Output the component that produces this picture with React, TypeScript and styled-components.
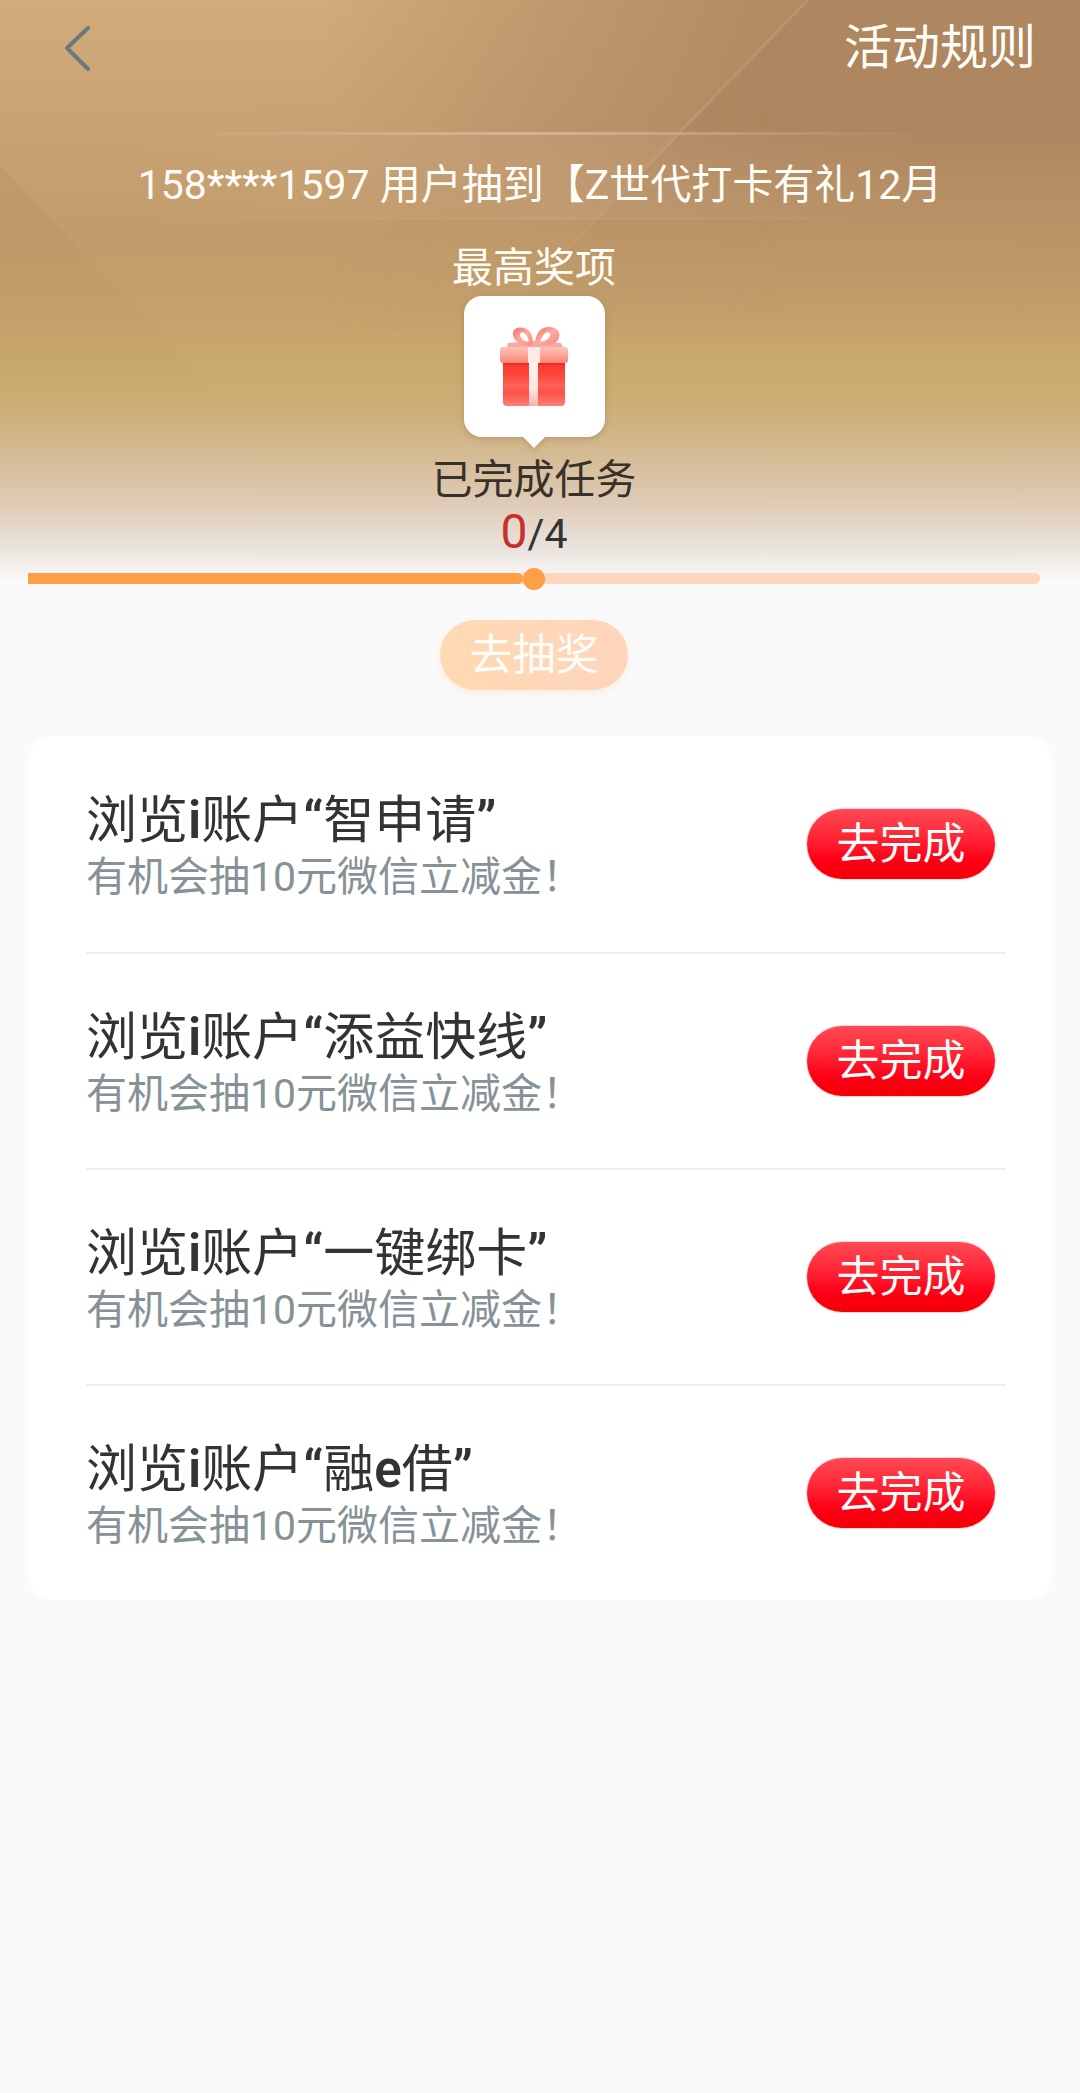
import React from "react";
import styled, { createGlobalStyle } from "styled-components";

const GlobalStyle = createGlobalStyle`
  *, *::before, *::after { box-sizing: border-box; }
  body {
    margin: 0;
    background: #fafafa;
    color: #333333;
    font-family: Roboto, "Noto Sans CJK SC", sans-serif;
    font-size: 41px;
    line-height: 56px;
  }
  button { font: inherit; border: 0; padding: 0; background: none; cursor: pointer; }
  h1, h2, p, ul { margin: 0; padding: 0; font: inherit; }
`;

const Page = styled.main`
  position: relative;
  min-height: 100vh;
`;

const Backdrop = styled.svg`
  position: absolute;
  inset: 0 0 auto 0;
  width: 100%;
  height: 580px;
  z-index: -1;
`;

const TopBar = styled.header`
  display: flex;
  align-items: center;
  justify-content: space-between;
  height: 96px;
  padding: 0 44px 0 56px;
  margin-bottom: 36px;
`;

const BackButton = styled.button`
  display: flex;
  width: 44px;
  height: 56px;
  align-items: center;
  justify-content: flex-start;
`;

const RulesButton = styled.button`
  color: #fffdf6;
  font-size: 48px;
`;

const Marquee = styled.p`
  position: relative;
  padding: 25px 0 7px;
  text-align: center;
  white-space: nowrap;
  overflow: hidden;
  color: #fffdf6;
  background: linear-gradient(90deg, rgba(210, 175, 150, 0) 12%, rgba(210, 175, 150, 0.16) 50%, rgba(210, 175, 150, 0) 86%);

  &::before,
  &::after {
    content: "";
    position: absolute;
    left: 15%;
    right: 14%;
    height: 3px;
  }
  &::before {
    top: 0;
    background: linear-gradient(90deg, rgba(222, 186, 162, 0), rgba(222, 186, 162, 0.75) 45%, rgba(222, 186, 162, 0));
  }
  &::after {
    bottom: 0;
    background: linear-gradient(90deg, rgba(210, 175, 120, 0), rgba(210, 175, 120, 0.2) 45%, rgba(210, 175, 120, 0));
  }
`;

const Draw = styled.section`
  display: flex;
  flex-direction: column;
  align-items: center;
  padding: 20px 40px 0 28px;
`;

const PrizeLabel = styled.h1`
  color: #fffdf6;
`;

const PrizeCard = styled.div`
  position: relative;
  display: flex;
  align-items: center;
  justify-content: center;
  width: 141px;
  height: 141px;
  margin-bottom: 15px;
  border-radius: 18px;
  background: #ffffff;
  filter: drop-shadow(0 2px 3px rgba(120, 85, 40, 0.3));

  &::after {
    content: "";
    position: absolute;
    top: 100%;
    left: 50%;
    transform: translateX(-50%);
    border: 11px solid transparent;
    border-top-color: #ffffff;
    border-bottom: 0;
  }
`;

const DoneLabel = styled.p`
  color: #38302a;
`;

const Counter = styled.p`
  margin-bottom: 15px;
  line-height: 48px;
`;

const CounterDone = styled.span`
  color: #c8302c;
  font-size: 48px;
`;

const Track = styled.div`
  display: flex;
  align-items: center;
  width: 100%;
  height: 11px;
  border-radius: 0 6px 6px 0;
  background: #fdd6bb;
`;

const TrackFill = styled.div`
  height: 11px;
  border-radius: 0 6px 6px 0;
  background: #fe9e46;
`;

const TrackDot = styled.div`
  flex: none;
  width: 22px;
  height: 22px;
  border-radius: 50%;
  background: #fe9e46;
`;

const Pill = styled.button<{ $tone: "muted" | "primary" }>`
  flex: none;
  width: 188px;
  height: 70px;
  border-radius: 35px;
  color: #fffdfa;
  font-size: 43px;
  background: ${({ $tone }) =>
    $tone === "muted"
      ? "linear-gradient(100deg, #fedab2, #ffd5bd)"
      : "linear-gradient(180deg, #ff4a55 0%, #fe2636 40%, #fd0018 72%, #f50004 100%)"};
  box-shadow: ${({ $tone }) =>
    $tone === "muted" ? "0 3px 8px rgba(254, 200, 160, 0.25)" : "0 0 2px rgba(253, 0, 24, 0.5)"};
`;

const DrawButton = styled(Pill)`
  margin-top: 36px;
`;

const Tasks = styled.ul`
  margin: 46px 28px 0;
  padding: 0 46px 0 58px;
  border-radius: 24px;
  background: #ffffff;
  list-style: none;
`;

const Task = styled.li`
  display: flex;
  align-items: center;
  justify-content: space-between;
  height: 216px;
  padding-right: 11px;

  & + & {
    border-top: 2px solid #eeeeee;
  }
`;

const TaskText = styled.div`
  padding-top: 10px;
`;

const TaskTitle = styled.h2`
  color: #333333;
  font-size: 51px;
  line-height: 56px;
`;

const Latin = styled.b`
  font-weight: 600;
`;

const TaskNote = styled.p`
  color: #869296;
`;

const tasks = ["浏览i账户“智申请”", "浏览i账户“添益快线”", "浏览i账户“一键绑卡”", "浏览i账户“融e借”"];

/* Latin letters and quotes are set heavier than the Chinese characters. */
function mixedWeight(text: string) {
  return text
    .split(/([a-z“”]+)/)
    .map((part, index) => (index % 2 ? <Latin key={index}>{part}</Latin> : part));
}

function HeroBackdrop() {
  return (
    <Backdrop viewBox="0 0 1080 580" preserveAspectRatio="none" aria-hidden="true">
      <defs>
        <linearGradient id="base" x1="0" y1="0" x2="0" y2="1">
          <stop offset="0" stopColor="#d2ab7b" />
          <stop offset="0.2" stopColor="#caa375" />
          <stop offset="0.4" stopColor="#c19c6b" />
          <stop offset="0.52" stopColor="#c4a06c" />
          <stop offset="0.64" stopColor="#caaa6d" />
          <stop offset="0.7" stopColor="#ccae76" />
          <stop offset="0.78" stopColor="#d4ba92" />
          <stop offset="0.86" stopColor="#decab3" />
          <stop offset="0.94" stopColor="#e9e1da" />
          <stop offset="1" stopColor="#f9f9f9" />
        </linearGradient>
        <linearGradient id="side" x1="0.3" y1="0" x2="0.72" y2="0">
          <stop offset="0" stopColor="#ab835e" stopOpacity="0" />
          <stop offset="0.5" stopColor="#ab835e" stopOpacity="0.45" />
          <stop offset="1" stopColor="#ab835e" stopOpacity="0.8" />
        </linearGradient>
        <linearGradient id="fade" x1="0" y1="0" x2="0" y2="1">
          <stop offset="0" stopColor="#fff" />
          <stop offset="0.22" stopColor="#fff" />
          <stop offset="0.42" stopColor="#fff" stopOpacity="0.3" />
          <stop offset="0.6" stopColor="#fff" stopOpacity="0" />
        </linearGradient>
        <mask id="upper">
          <rect width="1080" height="580" fill="url(#fade)" />
        </mask>
        <linearGradient id="facet" x1="0" y1="165" x2="0" y2="440" gradientUnits="userSpaceOnUse">
          <stop offset="0" stopColor="#b08a55" stopOpacity="0.22" />
          <stop offset="1" stopColor="#b08a55" stopOpacity="0" />
        </linearGradient>
      </defs>
      <rect width="1080" height="580" fill="url(#base)" />
      <g mask="url(#upper)">
        <rect width="1080" height="580" fill="url(#side)" />
        <path d="M808 0H1080V580H248Z" fill="#a87f5b" fillOpacity="0.4" />
        <path d="M808 0L460 360" stroke="#cfa680" strokeOpacity="0.35" strokeWidth="3" />
      </g>
      <path d="M0 165L260 440H0Z" fill="url(#facet)" />
    </Backdrop>
  );
}

function GiftIcon() {
  return (
    <svg width="70" height="82" viewBox="0 0 70 82" aria-hidden="true">
      <defs>
        <linearGradient id="box" x1="0" y1="0" x2="0" y2="1">
          <stop offset="0" stopColor="#fa3326" />
          <stop offset="0.35" stopColor="#fd4b3e" />
          <stop offset="0.55" stopColor="#ff6258" />
          <stop offset="0.7" stopColor="#fc5148" />
          <stop offset="1" stopColor="#fb8177" />
        </linearGradient>
        <linearGradient id="lid" x1="0" y1="0" x2="0" y2="1">
          <stop offset="0" stopColor="#ffc3b8" />
          <stop offset="1" stopColor="#fb8577" />
        </linearGradient>
        <linearGradient id="ribbon" x1="0" y1="0" x2="0" y2="1">
          <stop offset="0" stopColor="#fff0ec" />
          <stop offset="0.6" stopColor="#ffe6e1" />
          <stop offset="1" stopColor="#fbb1aa" />
        </linearGradient>
        <linearGradient id="bow" x1="0" y1="0" x2="1" y2="1">
          <stop offset="0" stopColor="#f0716b" />
          <stop offset="0.5" stopColor="#fcaba0" />
          <stop offset="1" stopColor="#f9887c" />
        </linearGradient>
      </defs>
      <path d="M9 17L33 15L62 17L64 21H8Z" fill="#f7a9a1" />
      <path d="M34 19C21 21 13 14 14 7C15 0 26 0 31 6C34 11 34 15 34 19ZM30 17C30 12 27 7 23 6C19 7 21 14 30 17Z" fill="url(#bow)" fillRule="evenodd" />
      <path d="M36 19C36 8 41 1 50 1C59 1 63 8 59 14C55 20 46 19 36 19ZM41 16C48 15 52 11 51 7C47 4 43 10 41 16Z" fill="url(#bow)" fillRule="evenodd" />
      <path d="M4 35H66V76Q66 80 62 80H8Q4 80 4 76Z" fill="url(#box)" />
      <rect x="1" y="21" width="68" height="16" rx="3" fill="url(#lid)" />
      <path d="M4 37H66V39H4Z" fill="#d92d20" fillOpacity="0.7" />
      <rect x="29" y="21" width="12" height="16" fill="#ffeae5" />
      <rect x="30" y="37" width="9" height="43" fill="url(#ribbon)" />
    </svg>
  );
}

export default function App() {
  return (
    <>
      <GlobalStyle />
      <Page>
        <HeroBackdrop />
        <TopBar>
          <BackButton type="button" aria-label="返回">
            <svg width="44" height="48" viewBox="0 0 44 48" fill="none" aria-hidden="true">
              <path d="M32 4L11 24L32 45" stroke="#687a7b" strokeWidth="4" strokeLinecap="round" strokeLinejoin="round" />
            </svg>
          </BackButton>
          <RulesButton type="button">活动规则</RulesButton>
        </TopBar>
        <Marquee>158****1597 用户抽到【Z世代打卡有礼12月</Marquee>
        <Draw>
          <PrizeLabel>最高奖项</PrizeLabel>
          <PrizeCard>
            <GiftIcon />
          </PrizeCard>
          <DoneLabel>已完成任务</DoneLabel>
          <Counter>
            <CounterDone>0</CounterDone>/4
          </Counter>
          <Track role="progressbar" aria-label="已完成任务" aria-valuemin={0} aria-valuemax={4} aria-valuenow={0}>
            <TrackFill style={{ width: "calc(50% - 11px)" }} />
            <TrackDot />
          </Track>
          <DrawButton type="button" $tone="muted">去抽奖</DrawButton>
        </Draw>
        <Tasks>
          {tasks.map((title) => (
            <Task key={title}>
              <TaskText>
                <TaskTitle>{mixedWeight(title)}</TaskTitle>
                <TaskNote>有机会抽10元微信立减金！</TaskNote>
              </TaskText>
              <Pill type="button" $tone="primary">去完成</Pill>
            </Task>
          ))}
        </Tasks>
      </Page>
    </>
  );
}
